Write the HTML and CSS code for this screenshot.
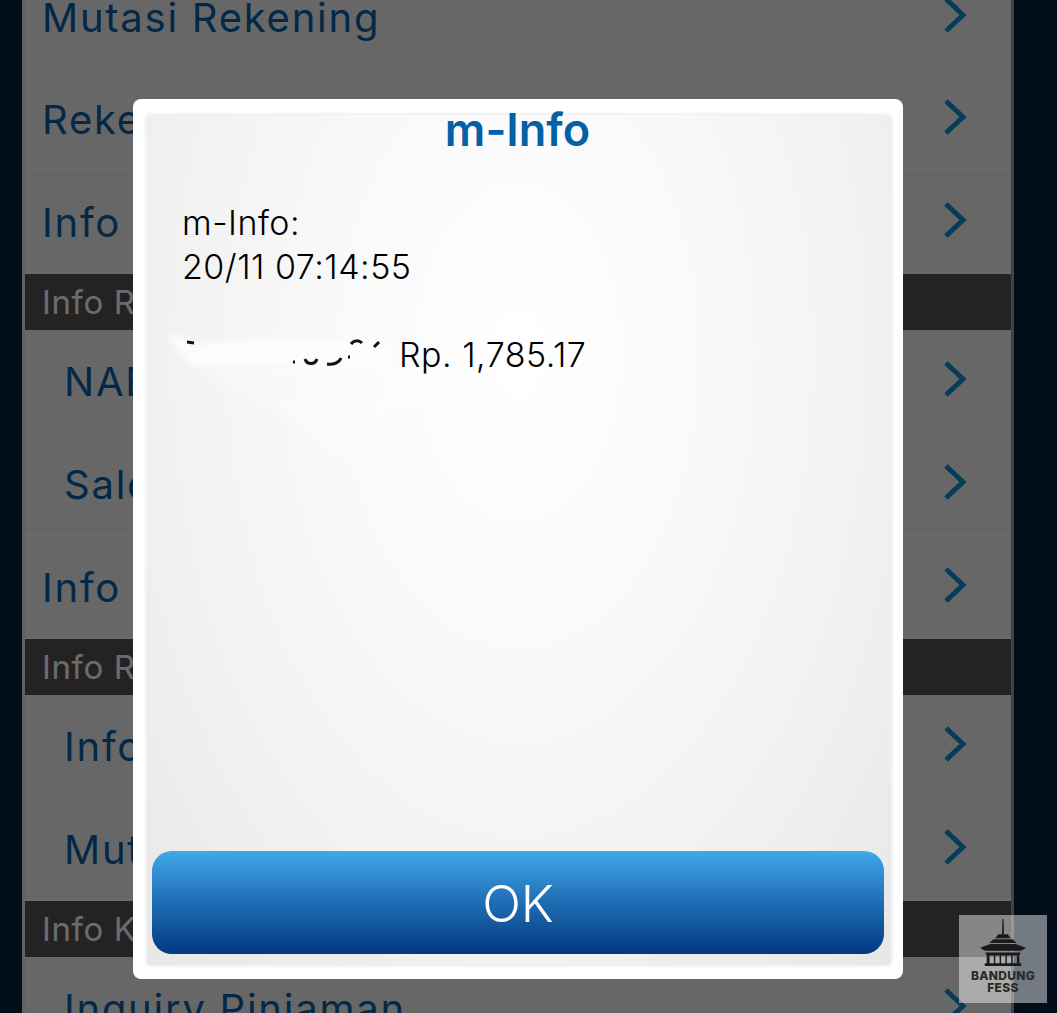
FILE: index.html
```html
<!DOCTYPE html>
<html lang="en">
  <head>
    <meta charset="UTF-8" />
    <meta name="viewport" content="width=device-width, initial-scale=1.0" />
    <title>m-Info</title>
    <link rel="stylesheet" href="styles.css">
  </head>
  <body>
    <div class="menu">
      <a class="row row-first">Mutasi Rekening<svg class="chev" viewBox="0 0 24 36"><path d="M3 2 L20 18 L3 34" /></svg></a>
      <a class="row">Rekening Tabungan<svg class="chev" viewBox="0 0 24 36"><path d="M3 2 L20 18 L3 34" /></svg></a>
      <a class="row">Info Saldo<svg class="chev" viewBox="0 0 24 36"><path d="M3 2 L20 18 L3 34" /></svg></a>
      <div class="section">Info Reksadana</div>
      <a class="row sub">NAB Reksadana<svg class="chev" viewBox="0 0 24 36"><path d="M3 2 L20 18 L3 34" /></svg></a>
      <a class="row sub">Saldo Reksadana<svg class="chev" viewBox="0 0 24 36"><path d="M3 2 L20 18 L3 34" /></svg></a>
      <a class="row">Info Portofolio<svg class="chev" viewBox="0 0 24 36"><path d="M3 2 L20 18 L3 34" /></svg></a>
      <div class="section">Info RDN</div>
      <a class="row sub">Info Saldo RDN<svg class="chev" viewBox="0 0 24 36"><path d="M3 2 L20 18 L3 34" /></svg></a>
      <a class="row sub">Mutasi RDN<svg class="chev" viewBox="0 0 24 36"><path d="M3 2 L20 18 L3 34" /></svg></a>
      <div class="section">Info Kredit</div>
      <a class="row sub">Inquiry Pinjaman<svg class="chev" viewBox="0 0 24 36"><path d="M3 2 L20 18 L3 34" /></svg></a>
    </div>

    <div class="scrim"></div>

    <div class="dialog">
      <div class="dialog-inner">
        <svg class="smudge" viewBox="0 0 270 130">
          <path class="smudge-tip" d="M2 6 C8 0 16 8 26 14 L60 12 L110 8 L220 12 L222 32 L60 34 L24 36 Z" />
          <path class="smudge-faint" d="M24 36 L222 30 L258 56 L255 72 L228 74 L205 112 L178 126 L150 112 L110 80 L50 50 Z" />
        </svg>
        <svg class="marks" viewBox="0 0 270 130">
          <path d="M21 12 L28 13" />
          <path d="M127 32 L129 32" />
          <path d="M139 29 C141 35 149 35 151 29" />
          <path d="M161 34 C167 35 173 33 175 28" />
          <path d="M182 27 L184 27" />
          <path d="M185 14 C188 10 193 10 196 13" />
          <path d="M208 17 L213 12" />
        </svg>
        <h1 class="dialog-title">m-Info</h1>
        <div class="dialog-msg">
          <p>m-Info:</p>
          <p>20/11 07:14:55</p>
          <p class="balance"><span class="hidden-acct"></span>Rp. 1,785.17</p>
        </div>
        <button class="ok-btn">OK</button>
      </div>
    </div>

    <div class="watermark">
      <svg class="wm-logo" viewBox="0 0 50 50">
        <path d="M24.4 0 H25.6 L26 16 H24 Z" />
        <path d="M20 16 H30 L33 20 H17 Z" />
        <path d="M15 21 H35 L39 25 H11 Z" />
        <path d="M12 26 H38 L49 30 C46 32 44 33 43 33 H7 C6 33 4 32 1 30 Z" />
        <path d="M7 35 H43 V37 H42 V46 H44 V49 H6 V46 H8 V37 H7 Z M11 38 V46 H15.5 V38 Z M17 38 V46 H21.5 V38 Z M23 38 V46 H27.5 V38 Z M29 38 V46 H33.5 V38 Z M35 38 V46 H39.5 V38 Z" fill-rule="evenodd" />
      </svg>
      <div class="wm-text">BANDUNG<br />FESS</div>
    </div>
  </body>
</html>
```

FILE: styles.css
```css
html,
body {
  margin: 0;
  height: 100%;
  overflow: hidden;
}
body {
  font-family: Inter, "Open Sans", sans-serif;
  background: #001f40;
  position: relative;
}
.menu {
  width: 986px;
  height: 1013px;
  margin-left: 25px;
  overflow: hidden;
  background: #f6f6f6;
  box-shadow: -3px 0 0 #e8e8e8, 3px 0 0 #999fa8;
}
.row {
  display: flex;
  align-items: center;
  justify-content: space-between;
  box-sizing: border-box;
  height: 103px;
  padding: 2px 44px 0 17px;
  font-size: 40px;
  letter-spacing: 1.75px;
  color: #0a60a8;
  border-bottom: 2px solid #fff;
}
.row-first {
  height: 68px;
  padding-top: 0;
  padding-bottom: 32px;
}
.row.sub {
  padding-left: 39px;
}
.section {
  display: flex;
  align-items: center;
  height: 56px;
  padding-left: 17px;
  font-size: 33px;
  letter-spacing: 0.6px;
  color: #fff;
  background: #555;
}
.chev {
  width: 24px;
  height: 36px;
  flex-shrink: 0;
  margin-top: -5px;
}
.chev path {
  fill: none;
  stroke: #0c8fd0;
  stroke-width: 5;
}
.scrim {
  position: absolute;
  inset: 0;
  background: rgba(0, 0, 0, 0.58);
}
.dialog {
  position: absolute;
  left: 133px;
  top: 99px;
  width: 770px;
  height: 880px;
  box-sizing: border-box;
  padding: 16px 12px 14px 14px;
  background: #fff;
  border-radius: 8px;
}
.dialog-inner {
  position: relative;
  height: 100%;
  display: flex;
  flex-direction: column;
  background: radial-gradient(ellipse at 50% 28%, #fff 0, #f9f9f9 35%, #f2f2f2 65%, #e7e7e7 100%);
  border-radius: 4px;
  box-shadow: 0 0 4px rgba(0, 0, 0, 0.14);
}
.dialog-title {
  position: relative;
  margin: 0;
  padding-right: 3px;
  font-size: 45px;
  line-height: 30px;
  font-weight: 600;
  text-align: center;
  color: #0560a8;
}
.dialog-msg {
  position: relative;
  flex: 1;
  padding: 56px 0 0 35px;
  font-size: 34px;
  font-weight: 300;
  letter-spacing: 0.5px;
  line-height: 44px;
  color: #000;
}
.dialog-msg p {
  margin: 0;
}
.balance {
  margin-top: 44px !important;
  display: flex;
}
.hidden-acct {
  width: 217px;
}
.smudge,
.marks {
  position: absolute;
  left: 19px;
  top: 215px;
  width: 270px;
  height: 130px;
}
.smudge-tip {
  fill: #fff;
  opacity: 0.8;
  filter: blur(3px);
}
.smudge-faint {
  fill: #fff;
  opacity: 0.35;
  filter: blur(5px);
}
.marks path {
  fill: none;
  stroke: #111;
  stroke-width: 3;
}
.ok-btn {
  display: block;
  margin: 0 7px 11px 5px;
  height: 103px;
  padding-top: 3px;
  border: none;
  border-radius: 20px;
  background: linear-gradient(#40a8ea, #1f6db4 50%, #02397f);
  color: #fff;
  font-family: inherit;
  font-size: 51px;
  font-weight: 300;
}
.watermark {
  position: absolute;
  left: 959px;
  top: 915px;
  width: 88px;
  height: 88px;
  display: flex;
  flex-direction: column;
  align-items: center;
  background: rgba(255, 255, 255, 0.45);
}
.wm-logo {
  width: 48px;
  height: 48px;
  margin-top: 4px;
  fill: #1a1a1a;
}
.wm-text {
  font-size: 12px;
  line-height: 12px;
  font-weight: 800;
  letter-spacing: 0.3px;
  text-align: center;
  color: #2a2a2a;
  margin-top: 3px;
}
```
